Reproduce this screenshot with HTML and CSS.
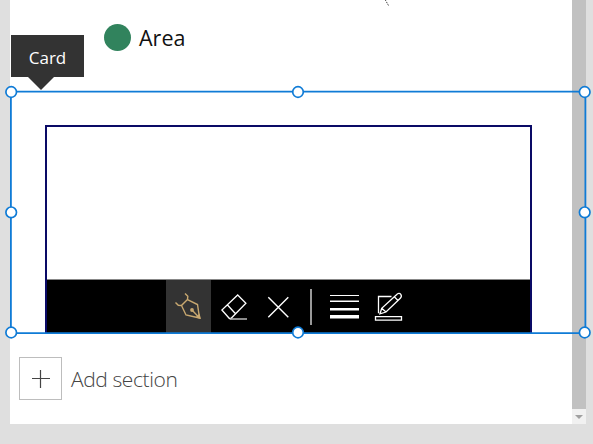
FILE: index.html
```html
<!DOCTYPE html>
<html lang="en">
<head>
<meta charset="utf-8">
<title>Form editor</title>
<link rel="stylesheet" href="styles.css">
</head>
<body>
<div class="panel">
  <main class="content">
    <div class="legend"><span class="dot"></span><span class="legend-label">Area</span></div>
    <section class="card">
      <div class="pen-input">
        <div class="canvas"></div>
        <div class="toolbar">
          <svg class="tool active" viewBox="166 280 45 53"><g fill="none" stroke="#c8a870" stroke-width="1.4"><path d="M187.500 299.500L181.500 305.500L186 315L199.500 318L197.500 304.500zM185 293.500l2.800 2.800-.3 3.200M175.500 302.500l2.800 2.800 3.200.2M192 310l7.500 8"/></g><circle cx="192" cy="310" r="1.900" fill="#c8a870"/><path d="M195.500 317.500l4-4 1.500 5.500z" fill="#c8a870"/></svg>
          <svg class="tool" viewBox="211 280 45 53"><g fill="none" stroke="#fff" stroke-width="1.300"><path d="M237.700 295l8.200 8.300-15 15.200h-1.500l-7.500-8.500zM227.500 305l7.800 8.500"/><path d="M230 319H247" stroke="#bbb" stroke-width="1.500"/></g></svg>
          <svg class="tool" viewBox="256 280 45 53"><path d="M268.300 297.300l20 20M288.300 297.300l-20 20" fill="none" stroke="#fff" stroke-width="1.400"/></svg>
          <span class="separator"></span>
          <svg class="tool lines" viewBox="321 280 45 53"><path d="M330 295h29v1h-29zM330 300.500h29v1.500h-29zM330 308h29v2.500h-29zM330 315h29v3.500h-29z" fill="#fff"/></svg>
          <svg class="tool" viewBox="366 280 45 53"><g fill="none" stroke="#fff" stroke-width="1.300"><path d="M391.500 296.500h-13v16.800M380 313.800l1.700-5.500 14.800-13.500c1.500-1.700 3.300-1.700 4.300-.5.900 1.200.7 2.600-.5 4L386 312zM381.700 308.300l4.300 3.700M394.300 296.800l3.800 3.800M375.500 316.600h26v3.600h-26z"/></g></svg>
        </div>
      </div>
    </section>
    <div class="add"><button class="add-button" aria-label="Add section"><svg viewBox="0 0 18 18"><path d="M0 8.500h18M8.500 0v18" stroke="#444" stroke-width="1.200"/></svg></button><span class="add-label">Add section</span></div>
  </main>
  <div class="scrollbar"><span class="scroll-button"><i></i></span></div>
</div>
<svg class="selection" viewBox="0 0 593 444">
  <path d="M385 0l1.500 1M386.500 2l2 3.500" stroke="#444" fill="none" stroke-dasharray="1.500 1"/>
  <g fill="none" stroke="#0f7bd6" stroke-width="1.800"><path d="M10.900 91.700H585.400V333.100H10.900z"/></g>
  <g fill="#fff" stroke="#0f7bd6" stroke-width="1.700"><circle cx="11.200" cy="92" r="5.300"/><circle cx="298" cy="92" r="5.300"/><circle cx="584.700" cy="92" r="5.300"/><circle cx="11.200" cy="212.300" r="5.300"/><circle cx="584.700" cy="212.300" r="5.300"/><circle cx="11.200" cy="332.500" r="5.300"/><circle cx="298" cy="332.500" r="5.300"/><circle cx="584.700" cy="332.500" r="5.300"/></g>
</svg>
<div class="tooltip">Card</div>
</body>
</html>
```

FILE: styles.css
```css
* { box-sizing: border-box; }
body {
  margin: 0;
  width: 593px;
  height: 444px;
  padding-left: 10px;
  overflow: hidden;
  background: #dfdfdf;
  font-family: "Open Sans", "Noto Sans", sans-serif;
}
.panel { display: flex; width: 576px; height: 424px; background: #fff; }
.content { width: 562px; display: flex; flex-direction: column; }
.legend {
  display: flex;
  align-items: center;
  gap: 8px;
  height: 91px;
  padding: 0 0 16px 94px;
}
.dot { width: 27px; height: 27px; border-radius: 50%; background: #31835d; }
.legend-label { font-size: 21.5px; line-height: 30px; color: #111; }
.card { height: 242px; padding: 34px 0 0 35px; }
.pen-input { width: 487px; height: 208px; border: 2px solid #0a0a66; border-bottom: 0; }
.canvas { height: 152px; }
.toolbar {
  display: flex;
  height: 54px;
  padding-left: 119px;
  background: #000;
  border-top: 1px solid #888;
}
.tool { width: 45px; height: 53px; flex: none; }
.active { background: #333; }
.separator { width: 2px; height: 36px; margin: 9px 9px 0; background: #999; }
.add { display: flex; align-items: center; gap: 9px; height: 91px; padding-left: 9px; }
.add-button {
  display: grid;
  place-items: center;
  width: 43px;
  height: 43px;
  padding: 0;
  border: 1px solid #bdbdbd;
  background: #fff;
}
.add-button svg { width: 18px; height: 18px; }
.add-label { font-size: 21px; font-weight: 300; letter-spacing: -0.4px; color: #444; }
.scrollbar { display: flex; align-items: flex-end; width: 14px; background: #c1c1c1; }
.scroll-button {
  display: grid;
  place-items: center;
  width: 14px;
  height: 15px;
  background: #f1f1f1;
}
.scroll-button i { border: 4px solid transparent; border-top-color: #a0a0a0; border-bottom: 0; }
.selection { position: absolute; left: 0; top: 0; width: 593px; height: 444px; }
.tooltip {
  position: absolute;
  left: 11px;
  top: 35px;
  width: 73px;
  height: 42px;
  color: #fff;
  background: #333;
  font-size: 17px;
  line-height: 45px;
  text-align: center;
}
.tooltip::after {
  content: "";
  position: absolute;
  left: 17px;
  top: 42px;
  border: 13px solid transparent;
  border-top-color: #333;
  border-bottom: 0;
}
```
